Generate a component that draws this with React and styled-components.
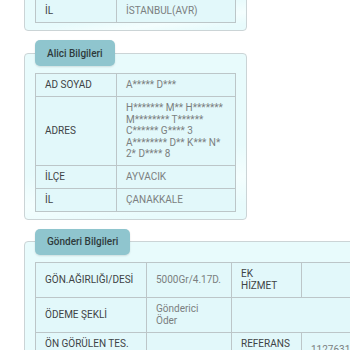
import styled, { createGlobalStyle } from 'styled-components';

const GlobalStyle = createGlobalStyle`
  html, body {
    margin: 0;
    padding: 0;
    background: #fff;
    overflow: hidden;
  }
  body {
    font-family: Roboto, "Noto Sans", "Liberation Sans", sans-serif;
  }
`;

const Page = styled.div`
  width: 350px;
  height: 350px;
  overflow: hidden;
`;

// page is scrolled: the first panel is only partly visible
const Stack = styled.div`
  display: flex;
  flex-direction: column;
  align-items: flex-start;
  gap: 9px;
  padding-left: 24px;
  margin-top: -34px;
`;

const Panel = styled.fieldset`
  box-sizing: border-box;
  width: ${p => p.$width}px;
  min-width: 0;
  margin: 0;
  padding: 7px 10px 7px;
  border: 1px solid #cbd4d6;
  border-radius: 4px;
  background: linear-gradient(172deg, #e8fbfc 0%, #e8fbfc 62%, #f4fefe 78%, #e8fbfc 92%);
`;

const Legend = styled.legend`
  box-sizing: border-box;
  height: 26px;
  padding: 0 12px;
  margin: 0;
  display: flex;
  align-items: center;
  font-size: 10px;
  font-weight: 500;
  color: #2e3a3c;
  background: #8fc5ce;
  border-radius: 5px;
  box-shadow: 0 1px 2px rgba(0, 0, 0, 0.12);
`;

const Table = styled.table`
  width: ${p => p.$width}px;
  table-layout: fixed;
  border-collapse: collapse;
  background: #e2f8fa;
`;

const Cell = styled.td`
  box-sizing: border-box;
  width: ${p => (p.$w ? `${p.$w}px` : 'auto')};
  padding: 5px 10px 5px 9px;
  border: 1px solid #bcc6c8;
  font-size: 10px;
  line-height: ${p => (p.$tight ? '11.6px' : '12px')};
  color: ${p => (p.$label ? '#3e4345' : '#7b7f80')};
  vertical-align: middle;
  white-space: ${p => (p.$nowrap ? 'nowrap' : 'normal')};
  overflow: hidden;
`;

const Line = styled.div`
  white-space: nowrap;
`;

const address = [
  'H******* M** H*******',
  'M******** T******',
  'C****** G**** 3',
  'A******** D** K*** N*',
  '2* D**** 8',
];

export default function App() {
  return (
    <Page>
      <GlobalStyle />
      <Stack>
        <Panel $width={223}>
          <Legend>Gönderici Bilgileri</Legend>
          <Table $width={201}>
            <tbody>
              <tr>
                <Cell $label $w={81}>İL</Cell>
                <Cell>İSTANBUL(AVR)</Cell>
              </tr>
            </tbody>
          </Table>
        </Panel>

        <Panel $width={223}>
          <Legend>Alici Bilgileri</Legend>
          <Table $width={201}>
            <tbody>
              <tr>
                <Cell $label $w={81}>AD SOYAD</Cell>
                <Cell>A***** D***</Cell>
              </tr>
              <tr>
                <Cell $label>ADRES</Cell>
                <Cell $tight>
                  {address.map(line => (
                    <Line key={line}>{line}</Line>
                  ))}
                </Cell>
              </tr>
              <tr>
                <Cell $label>İLÇE</Cell>
                <Cell>AYVACIK</Cell>
              </tr>
              <tr>
                <Cell $label>İL</Cell>
                <Cell>ÇANAKKALE</Cell>
              </tr>
            </tbody>
          </Table>
        </Panel>

        <Panel $width={420}>
          <Legend>Gönderi Bilgileri</Legend>
          <Table $width={376}>
            <tbody>
              <tr>
                <Cell $label $w={111}>GÖN.AĞIRLIĞI/DESİ</Cell>
                <Cell $w={85} $nowrap>5000Gr/4.17D.</Cell>
                <Cell $label $w={70}>EK HİZMET</Cell>
                <Cell />
              </tr>
              <tr>
                <Cell $label>ÖDEME ŞEKLİ</Cell>
                <Cell>Gönderici Öder</Cell>
                <Cell colSpan={2} />
              </tr>
              <tr>
                <Cell $label>ÖN GÖRÜLEN TES. TAR.</Cell>
                <Cell />
                <Cell $label>REFERANS NO</Cell>
                <Cell $nowrap>112763112</Cell>
              </tr>
            </tbody>
          </Table>
        </Panel>
      </Stack>
    </Page>
  );
}
